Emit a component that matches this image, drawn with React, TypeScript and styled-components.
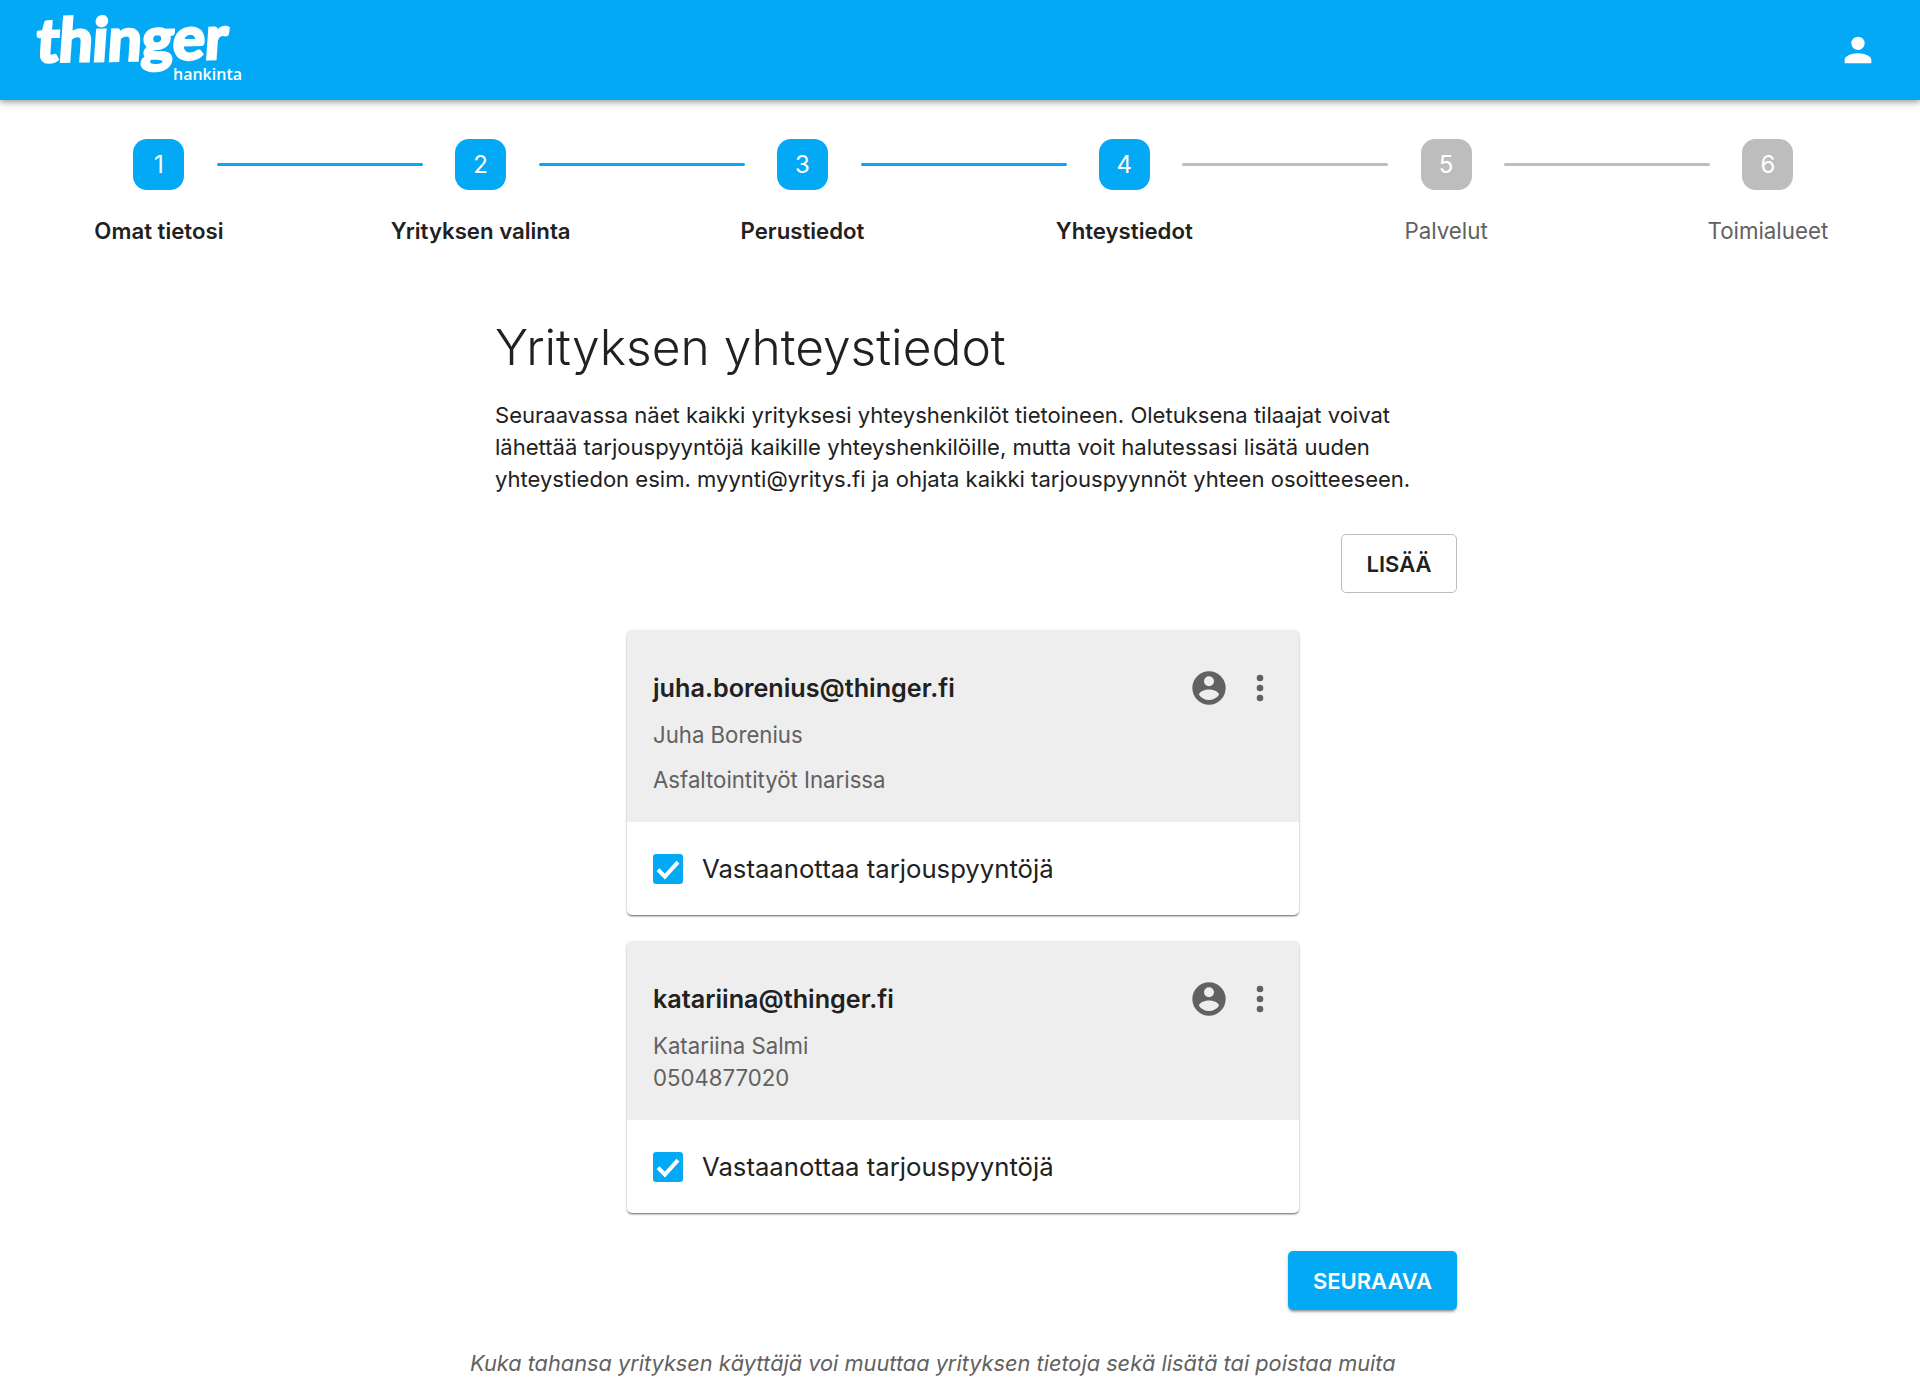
import React, { FC } from 'react';
import styled, { createGlobalStyle } from 'styled-components';

const BLUE = '#03a9f4';
const FONT = 'Inter, Roboto, "Noto Sans", sans-serif';

const GlobalStyle = createGlobalStyle`
  html, body { margin: 0; padding: 0; background: #fff; }
  body { font-family: ${FONT}; color: #212121; overflow: hidden; }
`;

const Page = styled.div`
  width: 1920px;
  height: 1382px;
  overflow: hidden;
`;

const Header = styled.header`
  height: 100px;
  background: ${BLUE};
  box-shadow: 0 2px 4px -1px rgba(0,0,0,.2), 0 4px 5px rgba(0,0,0,.14), 0 1px 10px rgba(0,0,0,.12);
  display: flex;
  align-items: flex-start;
  justify-content: space-between;
  padding: 0 42px 0 35px;
`;

const Logo = styled.div`
  position: relative;
  width: 215px;
  height: 100px;
  color: #fff;
`;

const LogoWord = styled.span`
  position: absolute;
  left: 0;
  top: 12px;
  font-family: Lato, "Open Sans", sans-serif;
  font-size: 60px;
  font-weight: 700;
  line-height: 54px;
  letter-spacing: 0;
  -webkit-text-stroke: 3px #fff;
  transform: skewX(-5deg) rotate(-1deg);
  transform-origin: left bottom;
`;

const LogoSub = styled.span`
  position: absolute;
  left: 138px;
  top: 66px;
  font-family: "Open Sans", sans-serif;
  font-size: 16px;
  font-weight: 600;
  line-height: 16px;
`;

const UserButton = styled.div`
  height: 100px;
  display: flex;
  align-items: center;
  color: #fff;
  svg { width: 40px; height: 40px; fill: currentColor; display: block; }
`;

const Stepper = styled.div`
  display: grid;
  grid-template-columns: repeat(6, 321.8px);
  margin-left: -2px;
  padding-top: 39px;
`;

const Step = styled.div`
  position: relative;
  display: flex;
  flex-direction: column;
  align-items: center;
`;

const StepBadge = styled.div<{ $on: boolean }>`
  width: 51px;
  height: 51px;
  border-radius: 14px;
  background: ${p => (p.$on ? BLUE : '#bdbdbd')};
  color: #fff;
  font-size: 24px;
  display: flex;
  align-items: center;
  justify-content: center;
`;

const StepLine = styled.div<{ $on: boolean }>`
  position: absolute;
  left: 219px;
  top: 24px;
  width: 206px;
  height: 3px;
  border-radius: 2px;
  background: ${p => (p.$on ? BLUE : '#bdbdbd')};
`;

const StepLabel = styled.div<{ $on: boolean }>`
  margin-top: 27px;
  font-size: ${p => (p.$on ? 22.2 : 22.3)}px;
  line-height: 28px;
  font-weight: ${p => (p.$on ? 600 : 400)};
  color: ${p => (p.$on ? '#212121' : '#616161')};
  white-space: nowrap;
`;

const Main = styled.main`
  width: 962px;
  margin: 70px 0 0 495px;
`;

const Title = styled.h1`
  margin: 0;
  font-size: 49.7px;
  line-height: 64px;
  font-weight: 300;
  color: #212121;
`;

const Intro = styled.p`
  margin: 20px 0 0;
  font-size: 22.05px;
  line-height: 32px;
`;

const ButtonRow = styled.div`
  display: flex;
  justify-content: flex-end;
`;

const OutlineButton = styled.button`
  margin-top: 39px;
  width: 116px;
  height: 59px;
  border: 1px solid #bdbdbd;
  border-radius: 5px;
  background: #fff;
  color: #212121;
  font: 600 22px ${FONT};
`;

const PrimaryButton = styled.button`
  margin-top: 38px;
  width: 169px;
  height: 59px;
  border: 0;
  border-radius: 5px;
  background: ${BLUE};
  color: #fff;
  font: 600 22px ${FONT};
  box-shadow: 0 3px 3px -2px rgba(0,0,0,.3), 0 2px 2px rgba(0,0,0,.14), 0 1px 5px rgba(0,0,0,.12);
`;

const Cards = styled.div`
  width: 672px;
  margin: 37px 0 0 132px;
  display: flex;
  flex-direction: column;
  gap: 26px;
`;

const Card = styled.section`
  border-radius: 5px;
  overflow: hidden;
  background: #fff;
  box-shadow: 0 2px 2px -1px rgba(0,0,0,.4), 0 1px 2px rgba(0,0,0,.2), 0 1px 3px rgba(0,0,0,.12);
`;

const CardHead = styled.div`
  background: #eee;
  padding: 34px 19px 26px 26px;
`;

const EmailRow = styled.div`
  display: flex;
  align-items: center;
  height: 48px;
`;

const Email = styled.div`
  flex: 1;
  font-size: 25.2px;
  font-weight: 600;
  color: #212121;
`;

const IconSlot = styled.div<{ $gap?: number }>`
  margin-left: ${p => p.$gap ?? 0}px;
  color: #616161;
  display: flex;
  svg { width: 40px; height: 40px; fill: currentColor; display: block; }
`;

const Detail = styled.div<{ $gap?: number }>`
  margin-top: ${p => p.$gap ?? 0}px;
  font-size: 22.2px;
  line-height: 32px;
  color: #616161;
`;

const CardFoot = styled.label`
  height: 93px;
  padding-left: 26px;
  display: flex;
  align-items: center;
  gap: 19px;
  font-size: 25.7px;
`;

const CheckBox = styled.span`
  width: 30px;
  height: 30px;
  border-radius: 3px;
  background: ${BLUE};
  display: flex;
  align-items: center;
  justify-content: center;
  svg { width: 30px; height: 30px; }
`;

const FootNote = styled.p`
  margin: 37px 0 0 -25px;
  width: 926px;
  font-size: 21.75px;
  line-height: 32px;
  font-style: italic;
  color: #616161;
  white-space: nowrap;
`;

const steps = ['Omat tietosi', 'Yrityksen valinta', 'Perustiedot', 'Yhteystiedot', 'Palvelut', 'Toimialueet'];

const contacts = [
  { email: 'juha.borenius@thinger.fi', lines: ['Juha Borenius', 'Asfaltointityöt Inarissa'], gap: 13 },
  { email: 'katariina@thinger.fi', lines: ['Katariina Salmi', '0504877020'], gap: 0 },
];

const AccountIcon = () => (
  <svg viewBox="0 0 24 24"><path d="M12,4A4,4 0 0,1 16,8A4,4 0 0,1 12,12A4,4 0 0,1 8,8A4,4 0 0,1 12,4M12,14C16.42,14 20,15.79 20,18V20H4V18C4,15.79 7.58,14 12,14Z" /></svg>
);

const AccountCircleIcon = () => (
  <svg viewBox="0 0 24 24"><path d="M12,19.2C9.5,19.2 7.29,17.92 6,16C6.03,14 10,12.9 12,12.9C14,12.9 17.97,14 18,16C16.71,17.92 14.5,19.2 12,19.2M12,5A3,3 0 0,1 15,8A3,3 0 0,1 12,11A3,3 0 0,1 9,8A3,3 0 0,1 12,5M12,2A10,10 0 0,0 2,12A10,10 0 0,0 12,22A10,10 0 0,0 22,12A10,10 0 0,0 12,2Z" /></svg>
);

const DotsIcon = () => (
  <svg viewBox="0 0 24 24"><path d="M12,16A2,2 0 0,1 14,18A2,2 0 0,1 12,20A2,2 0 0,1 10,18A2,2 0 0,1 12,16M12,10A2,2 0 0,1 14,12A2,2 0 0,1 12,14A2,2 0 0,1 10,12A2,2 0 0,1 12,10M12,4A2,2 0 0,1 14,6A2,2 0 0,1 12,8A2,2 0 0,1 10,6A2,2 0 0,1 12,4Z" /></svg>
);

const CheckIcon = () => (
  <svg viewBox="0 0 24 24" fill="none" stroke="#fff" strokeWidth="3.2"><path d="M4 12.5l5.5 5.5L20 6.5" /></svg>
);

const App: FC = () => (
  <Page>
    <GlobalStyle />
    <Header>
      <Logo>
        <LogoWord>thinger</LogoWord>
        <LogoSub>hankinta</LogoSub>
      </Logo>
      <UserButton><AccountIcon /></UserButton>
    </Header>
    <Stepper>
      {steps.map((label, i) => (
        <Step key={label}>
          <StepBadge $on={i < 4}>{i + 1}</StepBadge>
          {i < 5 && <StepLine $on={i < 3} />}
          <StepLabel $on={i < 4}>{label}</StepLabel>
        </Step>
      ))}
    </Stepper>
    <Main>
      <Title>Yrityksen yhteystiedot</Title>
      <Intro>
        Seuraavassa näet kaikki yrityksesi yhteyshenkilöt tietoineen. Oletuksena tilaajat voivat<br />
        lähettää tarjouspyyntöjä kaikille yhteyshenkilöille, mutta voit halutessasi lisätä uuden<br />
        yhteystiedon esim. myynti@yritys.fi ja ohjata kaikki tarjouspyynnöt yhteen osoitteeseen.
      </Intro>
      <ButtonRow><OutlineButton>LISÄÄ</OutlineButton></ButtonRow>
      <Cards>
        {contacts.map(c => (
          <Card key={c.email}>
            <CardHead>
              <EmailRow>
                <Email>{c.email}</Email>
                <IconSlot><AccountCircleIcon /></IconSlot>
                <IconSlot $gap={11}><DotsIcon /></IconSlot>
              </EmailRow>
              <Detail $gap={7}>{c.lines[0]}</Detail>
              <Detail $gap={c.gap}>{c.lines[1]}</Detail>
            </CardHead>
            <CardFoot>
              <CheckBox><CheckIcon /></CheckBox>
              Vastaanottaa tarjouspyyntöjä
            </CardFoot>
          </Card>
        ))}
      </Cards>
      <ButtonRow><PrimaryButton>SEURAAVA</PrimaryButton></ButtonRow>
      <FootNote>Kuka tahansa yrityksen käyttäjä voi muuttaa yrityksen tietoja sekä lisätä tai poistaa muita</FootNote>
    </Main>
  </Page>
);

export default App;
